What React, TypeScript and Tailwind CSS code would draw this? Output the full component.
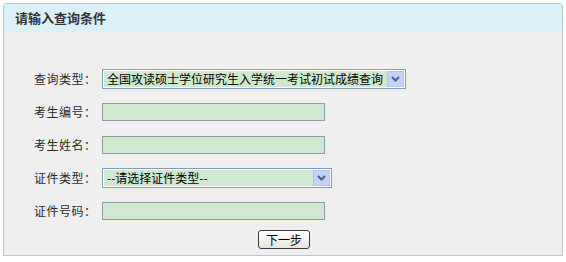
import React from 'react';

const font = { fontFamily: '"Noto Sans CJK SC", "Noto Sans", sans-serif' };

const Arrow: React.FC = () => (
  <div className="w-[17px] h-full bg-[#c3d3f7] border border-[#b4c6ee] flex items-center justify-center">
    <svg width="9" height="6" viewBox="0 0 9 6">
      <path d="M1 1 L4.5 4.5 L8 1" stroke="#4d6185" strokeWidth="2" fill="none" />
    </svg>
  </div>
);

const FakeSelect: React.FC<{ value: string; width: string }> = ({ value, width }) => (
  <div className={`${width} h-[20px] border border-[#7f9db9] bg-white p-px flex`}>
    <div className="flex-1 bg-[#cfe8cf] text-[12px] leading-[16px] text-black pl-[3px] whitespace-nowrap overflow-hidden">
      {value}
    </div>
    <Arrow />
  </div>
);

const Field: React.FC = () => (
  <input
    type="text"
    className="w-[223px] h-[18px] border border-[#8e9aa6] bg-[#cfe8cf] outline-none"
  />
);

const Row: React.FC<{ label: string; children: React.ReactNode }> = ({ label, children }) => (
  <div className="h-[33px] flex items-center">
    <div className="w-[68px] text-[12px] text-[#2b2b2b] tracking-[0.5px]">{label}</div>
    {children}
  </div>
);

export default function App() {
  return (
    <div className="w-[566px] h-[262px] bg-white p-[3px]" style={font}>
      <div className="w-[560px] h-[253px] border border-[#b9c8d3] rounded-tl-[3px] rounded-tr-[3px] bg-[#efefef] flex flex-col">
        <div className="h-[28px] bg-[#dcf0f8] flex items-center pl-[11px]">
          <span className="text-[13px] font-bold text-[#333]">请输入查询条件</span>
        </div>
        <div className="flex flex-col pl-[30px] pt-[30px]">
          <Row label="查询类型：">
            <FakeSelect value="全国攻读硕士学位研究生入学统一考试初试成绩查询" width="w-[304px]" />
          </Row>
          <Row label="考生编号：">
            <Field />
          </Row>
          <Row label="考生姓名：">
            <Field />
          </Row>
          <Row label="证件类型：">
            <FakeSelect value="--请选择证件类型--" width="w-[230px]" />
          </Row>
          <Row label="证件号码：">
            <Field />
          </Row>
          <div className="flex pl-[224px] pt-[3px]">
            <button className="w-[52px] h-[19px] border border-[#3c3c3c] rounded-[3px] bg-gradient-to-b from-white to-[#e6e6e0] text-[12px] leading-[16px] text-black">
              下一步
            </button>
          </div>
        </div>
      </div>
    </div>
  );
}
